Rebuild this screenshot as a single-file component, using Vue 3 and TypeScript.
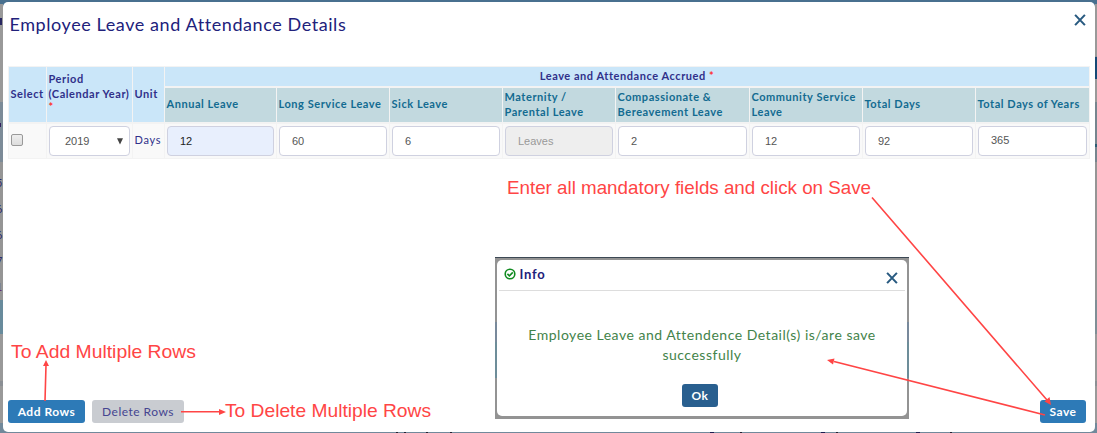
<script setup lang="ts">
interface Column { label: string; value: string; state?: 'filled' | 'disabled'; raised?: boolean }
const columns: Column[] = [
  { label: 'Annual Leave', value: '12', state: 'filled' },
  { label: 'Long Service Leave', value: '60' },
  { label: 'Sick Leave', value: '6' },
  { label: 'Maternity /\nParental Leave', value: 'Leaves', state: 'disabled' },
  { label: 'Compassionate &\nBereavement Leave', value: '2' },
  { label: 'Community Service\nLeave', value: '12' },
  { label: 'Total Days', value: '92' },
  { label: 'Total Days of Years', value: '365', raised: true },
]
</script>

<template>
  <div class="page">
    <div class="edge left">
      <i v-for="n in 9" :key="n" :class="'l' + n"></i>
      <div class="digits"><span>5</span><span>6</span><span>6</span><span>7</span><span class="visited">1</span></div>
    </div>
    <div class="edge right"><i v-for="n in 9" :key="n" :class="'r' + n"></i></div>
    <div class="marks"></div>
    <main class="modal">
      <header class="head">
        <h1>Employee Leave and Attendance Details</h1>
        <svg class="x" viewBox="0 0 11 11"><path d="M1 .8 10 10.2M10 .8 1 10.2" /></svg>
      </header>
      <section class="grid">
        <div class="th tall select">Select</div>
        <div class="th tall period"><span>Period</span><span>(Calendar Year)</span><b>*</b></div>
        <div class="th tall unit">Unit</div>
        <div class="th group"><span>Leave and Attendance Accrued <b>*</b></span></div>
        <div v-for="c in columns" :key="c.label" class="th sub"><span>{{ c.label }}</span></div>
        <div class="td"><span class="check"></span></div>
        <div class="td"><div class="field year"><span>2019</span><svg viewBox="0 0 6 7"><path d="M0 .3H6L3 6.5Z" /></svg></div></div>
        <div class="td days">Days</div>
        <div v-for="c in columns" :key="c.label + 'v'" class="td">
          <div class="field" :class="[c.state, { raised: c.raised }]">{{ c.value }}</div>
        </div>
      </section>
      <footer class="foot">
        <button class="btn add">Add Rows</button>
        <button class="btn del">Delete Rows</button>
        <button class="btn save">Save</button>
      </footer>
    </main>

    <div class="backdrop">
      <div class="dialog">
        <div class="dhead">
          <svg class="ok-icon" viewBox="0 0 12 12"><circle cx="6" cy="6" r="4.8" /><path d="M3.4 5.9 5.4 7.9 8.8 4.4" /></svg>
          <strong>Info</strong>
          <svg class="x" viewBox="0 0 11 11"><path d="M1 .8 10 10.2M10 .8 1 10.2" /></svg>
        </div>
        <p>Employee Leave and Attendence Detail(s) is/are save<br />successfully</p>
        <button class="btn ok">Ok</button>
      </div>
    </div>

    <svg class="notes" viewBox="0 0 1097 433">
      <text x="507" y="194" textLength="364" lengthAdjust="spacingAndGlyphs">Enter all mandatory fields and click on Save</text>
      <text x="11" y="358" textLength="185" lengthAdjust="spacingAndGlyphs">To Add Multiple Rows</text>
      <text x="225" y="417" textLength="206" lengthAdjust="spacingAndGlyphs">To Delete Multiple Rows</text>
      <path class="line" d="M45 401 46 365M181 411.7H220M872 197.5 1047 400M1045 415 834 361.500" />
      <path class="tip" d="M46 360 49 366H43ZM226 412 219 415V409ZM1051 405 1044.500 401.500 1049.500 397ZM827 360 834.500 358.500 833 364.500Z" />
    </svg>
  </div>
</template>

<style>
html, body { margin: 0; overflow: hidden; }
</style>
<style scoped>
* { box-sizing: border-box; }
.page { position: relative; width: 1097px; height: 433px; padding: 2px 2px 1px 3px; background: linear-gradient(#48708f 0 10px, #8b8f94 10px 420px, #71899b 420px); font-family: Lato, "Liberation Sans", sans-serif; overflow: hidden; }
.edge { position: absolute; top: 0; width: 3px; height: 433px; overflow: hidden; }
.edge i { position: absolute; left: 0; width: 3px; }
.left { left: 0; }
.right { right: 0; width: 2px; }
.l1 { top: 4px; height: 98px; background: #999; }
.left .l2 { top: 18px; height: 7px; width: 2px; background: #282760; }
.l3 { top: 102px; height: 60px; background: #7c8b98; }
.left .l4 { top: 123px; height: 4px; width: 1px; background: #33205f; }
.l5 { top: 162px; height: 138px; background: #959595; }
.l6 { top: 300px; height: 34px; background: #688b9c; }
.l7 { top: 334px; height: 47px; background: #999; }
.l8 { top: 386px; height: 37px; background: #999; }
.l9 { display: none; }
.digits { position: absolute; left: -4px; top: 170px; display: flex; flex-direction: column; font-size: 11px; line-height: 26px; color: #29296a; }
.digits span { height: 26px; }
.visited { color: #5b1670; }
.r1 { top: 4px; height: 52px; background: #999; }
.r2 { top: 57px; height: 22px; background: #154976; }
.r3 { top: 79px; height: 23px; background: #999; }
.r4 { top: 102px; height: 60px; background: #76858e; }
.r5 { top: 162px; height: 138px; background: #959595; }
.r6 { top: 300px; height: 34px; background: #7f8f96; }
.r7 { top: 334px; height: 47px; background: #999; }
.r8 { top: 386px; height: 37px; background: #999; }
.right .r9 { top: 144px; height: 3px; background: #2c5c74; }
.marks { position: absolute; left: 396px; bottom: 0; width: 580px; height: 1px; background: linear-gradient(90deg, #223 0 2px, transparent 2px 8px, #223 8px 10px, transparent 10px 30px, #223 30px 32px, transparent 32px 54px, #223 54px 56px, transparent 56px 314px, #1c1c50 314px 318px, transparent 318px 344px, #223 344px 346px, transparent 346px 425px, #1c1c50 425px 429px, transparent 429px 440px, #223 440px 442px, transparent 442px 520px, #1c1c50 520px 524px, transparent 524px 554px, #223 554px 556px, transparent 556px); }
.modal { position: relative; height: 430px; display: flex; flex-direction: column; padding: 0 5px 8px; background: #fff; border-radius: 5px; }
.head { height: 64px; display: flex; justify-content: space-between; padding: 11px 4px 0 1.5px; }
h1 { margin: -1px 0 0; font-size: 18px; line-height: 24px; font-weight: 400; letter-spacing: .58px; color: #21217b; white-space: nowrap; }
.x { width: 12px; height: 12px; margin-top: 1px; fill: none; stroke: #285a80; stroke-width: 1.9; }
.grid { width: 1082px; display: grid; grid-template-columns: 37px 85px 31px 111px 112px 112px 112px 133px 112px 112px 113px; grid-template-rows: 19px 34px 34px; column-gap: 1px; row-gap: 2px; padding: 1px; background: #f3f3f3; }
.th { display: flex; align-items: center; padding-bottom: 2px; background: #cae6f9; color: #30308a; font-size: 11px; line-height: 15px; font-weight: 700; letter-spacing: .55px; white-space: pre; }
.th b { color: #ff3030; font-weight: 700; }
.tall { grid-row: span 2; padding-left: 1.5px; }
.period { flex-direction: column; align-items: flex-start; justify-content: center; padding: 0 0 6px 1.5px; }
.period b { line-height: 12px; height: 12px; }
.group { grid-column: span 8; justify-content: center; }
.sub { padding: 0 0 3px 1.5px; background: #c2d9df; color: #126b91; }
.td { display: flex; align-items: center; padding: 0 2px; background: #f9f9f9; font-size: 11px; color: #30308a; letter-spacing: .7px; }
.days { padding: 0 0 3px 1.5px; }
.field { width: 100%; height: 30px; padding: 0 0 0 12px; border: 1px solid #cfd1e0; border-radius: 4px; background: #fff; font: 11px/28px "Liberation Sans", sans-serif; letter-spacing: 0; color: #555; }
.filled { background: #e8effd; color: #222; }
.disabled { background: #eee; color: #999; }
.raised { line-height: 27px; }
.year { display: flex; align-items: center; padding: 0 6px 0 15px; justify-content: space-between; }
.year svg { width: 6px; height: 7px; fill: #444; }
.check { width: 12px; height: 12px; margin-bottom: 2px; border: 1px solid #999; border-radius: 2px; background: linear-gradient(#eee, #ddd); }
.foot { display: flex; margin-top: auto; height: 24px; gap: 7px; }
.btn { height: 23px; padding: 0; border: 0; border-radius: 3px; background: #2d7ab7; color: #fff; font: 700 12px/23px Lato, "Liberation Sans", sans-serif; letter-spacing: .5px; white-space: nowrap; }
.add { width: 77px; }
.del { width: 92px; background: #c9ccd1; color: #454590; font-weight: 400; letter-spacing: .48px; }
.save { width: 46px; margin-left: auto; margin-right: 4px; }
.backdrop { position: absolute; left: 495px; top: 257px; width: 414px; height: 162px; padding: 2px 2px 3px; background: linear-gradient(#939393 0 64px, #78899b 64px 84px, #6d8d99 84px 120px, #939393 120px); border-top: 1px solid #3c4854; }
.dialog { height: 156px; display: flex; flex-direction: column; align-items: center; padding: 0 2px; background: #fff; border-radius: 5px; }
.dhead { width: 100%; height: 31px; display: flex; align-items: flex-start; border-bottom: 1px solid #ddd; padding: 4px 7.5px 0 4.5px; }
.dhead strong { margin-left: 4px; font-size: 13px; line-height: 20px; letter-spacing: .8px; color: #21217b; }
.dhead .x { margin: 8px 0 0 auto; }
.ok-icon { width: 12px; height: 12px; margin-top: 4px; fill: none; stroke: #118b20; stroke-width: 1.6; }
p { margin: 34px 0 0; text-align: center; font-size: 14px; line-height: 20px; letter-spacing: .51px; color: #43834a; white-space: nowrap; }
.ok { width: 36px; margin: 19px 4px 0 0; background: #295f8f; }
.notes { position: absolute; left: 0; top: 0; width: 1097px; height: 433px; font: 18.5px "Liberation Sans", sans-serif; fill: #ff4545; pointer-events: none; }
.line { stroke: #ff4545; stroke-width: 1.6; }
</style>
